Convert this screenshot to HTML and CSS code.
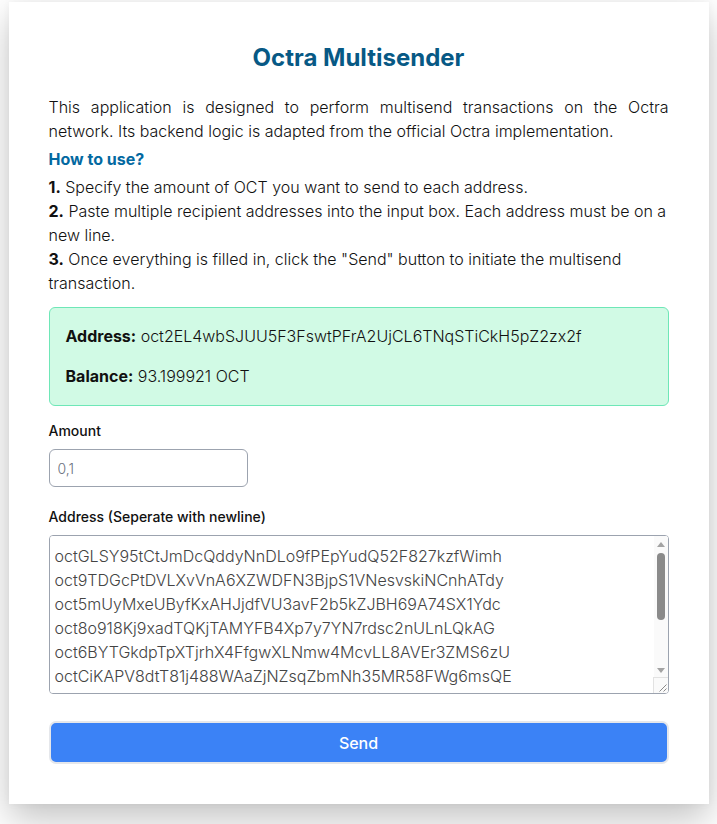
FILE: index.html
```html
<!DOCTYPE html>
<html lang="en">
<head>
<meta charset="utf-8">
<title>Octra Multisender</title>
<link rel="stylesheet" href="styles.css">
</head>
<body>
<main class="card">
  <h1 class="title">Octra Multisender</h1>
  <p class="intro">This application is designed to perform multisend transactions on the Octra network. Its backend logic is adapted from the official Octra implementation.</p>
  <h2 class="howto">How to use?</h2>
  <div class="steps">
    <p><strong>1.</strong> Specify the amount of OCT you want to send to each address.</p>
    <p><strong>2.</strong> Paste multiple recipient addresses into the input box. Each address must be on a new line.</p>
    <p><strong>3.</strong> Once everything is filled in, click the "Send" button to initiate the multisend transaction.</p>
  </div>
  <div class="wallet">
    <p><strong>Address:</strong> oct2EL4wbSJUU5F3FswtPFrA2UjCL6TNqSTiCkH5pZ2zx2f</p>
    <p><strong>Balance:</strong> 93.199921 OCT</p>
  </div>
  <label class="label" for="amount">Amount</label>
  <input class="amount" id="amount" type="text" value="0,1">
  <label class="label" for="addresses">Address (Seperate with newline)</label>
  <div class="area-wrap">
    <textarea class="addresses" id="addresses">octGLSY95tCtJmDcQddyNnDLo9fPEpYudQ52F827kzfWimh
oct9TDGcPtDVLXvVnA6XZWDFN3BjpS1VNesvskiNCnhATdy
oct5mUyMxeUByfKxAHJjdfVU3avF2b5kZJBH69A74SX1Ydc
oct8o918Kj9xadTQKjTAMYFB4Xp7y7YN7rdsc2nULnLQkAG
oct6BYTGkdpTpXTjrhX4FfgwXLNmw4McvLL8AVEr3ZMS6zU
octCiKAPV8dtT81j488WAaZjNZsqZbmNh35MR58FWg6msQE
octHq3bXz7WkR2TnP9vLmY4cA6sDfGjU8eN1oQ5iKxZrTbV
oct4FsW9nQpLk2XcVbJ7mYhRtG3aD6uE8zPqN5oKiTfCxMw
octZr7YkM2pQ9xWnL4vBcT6hJdF3sA8eGu5NqRiK1oXtPmV
oct7QmTnK3vXpL9cW2zYbF6hRdJ4sA8gE5uNiP1oKtMqZxB
octB2nWxP8kQ7mLcV4tZ9yHrF3jD6aS5gE1uNoKiTqXpRmW
octR5kLm9QxW2nVpT7zYcB4hFdJ3sA6gE8uNi1oKtPqMxZ</textarea>
    <div class="fake-scroll" aria-hidden="true">
      <span class="arrow-up"></span>
      <span class="thumb"></span>
      <span class="arrow-down"></span>
    </div>
    <div class="fake-corner" aria-hidden="true">
      <svg width="14" height="15" viewBox="0 0 14 15"><path d="M12.5 6.5 L5.5 13.5 M12.5 10.5 L9.5 13.5" stroke="#8a8a8a" stroke-width="1" fill="none"/></svg>
    </div>
  </div>
  <button class="send" type="button">Send</button>
</main>
</body>
</html>
```
FILE: styles.css
```css
* { box-sizing: border-box; }
html, body {
  margin: 0;
  background: #ffffff;
}
body {
  font-family: Inter, "Noto Sans", sans-serif;
  font-weight: 300;
  color: #111;
  font-size: 16px;
  line-height: 24px;
  padding-bottom: 20px;
}
.card {
  max-width: 700px;
  margin: 2px auto 0;
  background: #fff;
  padding: 40px;
  box-shadow: 0 15px 35px rgba(0,0,0,0.24), 0 0 8px rgba(0,0,0,0.04);
  display: flex;
  flex-direction: column;
}
.title {
  margin: 0 0 21px;
  text-align: center;
  font-size: 24px;
  line-height: 32px;
  font-weight: 700;
  color: #075985;
}
.intro {
  margin: 0 0 4px;
  text-align: justify;
}
.howto {
  margin: 0 0 4px;
  font-size: 16px;
  line-height: 24px;
  font-weight: 700;
  color: #0369a1;
}
.steps p { margin: 0; }
strong { font-weight: 700; }
.wallet {
  margin-top: 12px;
  background: #d1fae5;
  border: 1px solid #6ee7b7;
  border-radius: 6px;
  padding: 16px 16px 17px;
  display: flex;
  flex-direction: column;
  gap: 16px;
}
.wallet p { margin: 0; }
.label {
  display: block;
  margin-top: 15px;
  font-size: 14px;
  line-height: 20px;
  font-weight: 500;
  color: #111;
}
.amount {
  display: block;
  margin-top: 8px;
  width: 199px;
  height: 38px;
  padding: 0 8px;
  border: 1px solid #9ca3af;
  border-radius: 6px;
  font-family: inherit;
  font-weight: 300;
  font-size: 14px;
  color: #6b7280;
  background: #fff;
  margin-bottom: 5px;
}
.area-wrap {
  position: relative;
  margin-top: 8px;
}
.addresses {
  display: block;
  width: 100%;
  height: 159px;
  padding: 8px 20px 8px 5px;
  border: 1px solid #9ca3af;
  border-radius: 4px;
  font-family: inherit;
  font-weight: 300;
  font-size: 16px;
  line-height: 24px;
  color: #444;
  resize: vertical;
}
.fake-scroll {
  position: absolute;
  top: 1px;
  right: 1px;
  bottom: 17px;
  width: 14px;
  background: #fafafa;
  border-top-right-radius: 3px;
  pointer-events: none;
}
.arrow-up, .arrow-down {
  position: absolute;
  left: 3px;
  width: 0;
  height: 0;
  border-left: 4px solid transparent;
  border-right: 4px solid transparent;
}
.arrow-up {
  top: 6px;
  border-bottom: 5px solid #a3a3a3;
}
.arrow-down {
  bottom: 4px;
  border-top: 5px solid #a3a3a3;
}
.thumb {
  position: absolute;
  top: 17px;
  left: 3px;
  width: 8px;
  height: 67px;
  border-radius: 4px;
  background: #8a8a8a;
}
.fake-corner {
  position: absolute;
  right: 1px;
  bottom: 1px;
  width: 15px;
  height: 16px;
  background: #fafafa;
  border-top: 1px solid #e2e2e2;
  border-left: 1px solid #e2e2e2;
  border-bottom-right-radius: 3px;
  pointer-events: none;
}
.fake-corner svg { display: block; }
.send {
  margin-top: 27px;
  height: 43px;
  width: 100%;
  background: #3b82f6;
  border: 2px solid #e5e7eb;
  border-radius: 7px;
  color: #fff;
  font-family: inherit;
  font-size: 16px;
  font-weight: 500;
  cursor: pointer;
}
```
